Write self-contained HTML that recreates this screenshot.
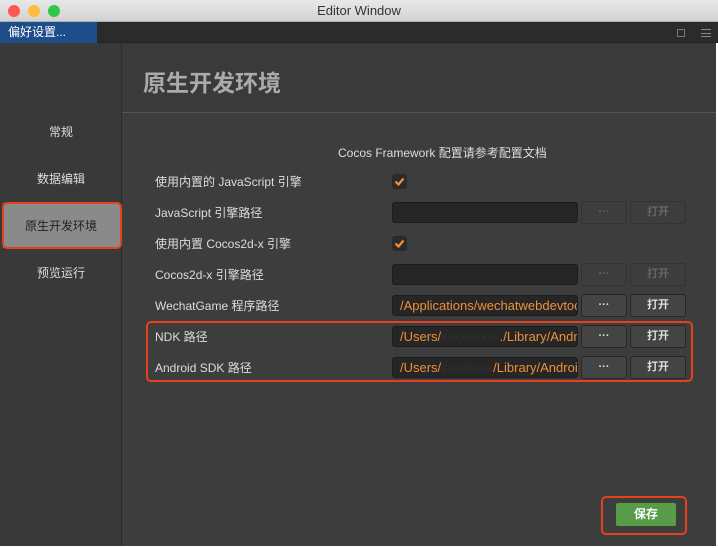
<!DOCTYPE html>
<html><head><meta charset="utf-8"><style>
*{margin:0;padding:0;box-sizing:border-box}
body{width:718px;height:548px;background:#fff;font-family:"Liberation Sans","Noto Sans CJK SC",sans-serif;position:relative;overflow:hidden;font-size:12px}
.abs{position:absolute}
#title{left:0;top:0;width:718px;height:22px;background:linear-gradient(#e8e8e8,#d2d2d2);border-bottom:1px solid #b0b0b0;text-align:center;line-height:22px;font-size:13px;color:#333}
.dot{top:5px;width:12px;height:12px;border-radius:50%}
#tabs{left:0;top:22px;width:718px;height:21px;background:#2b2b2b;border-bottom:1px solid #222}
#tab{left:0;top:22px;width:97px;height:21px;background:#1e4d8c;color:#fff;font-size:12px;line-height:21px;padding-left:8px}
#side{left:0;top:43px;width:122px;height:503px;background:#393939;border-right:1px solid #2c2c2c}
.si{left:0;width:122px;text-align:center;color:#ddd;font-size:12px}
#main{left:122px;top:43px;width:594px;height:503px;background:#3d3d3d}
#hdr{left:122px;top:43px;width:594px;height:70px;background:#3a3a3a;border-bottom:1px solid #555}
h1{position:absolute;left:143px;top:64px;font-size:23px;color:#aaa;font-weight:bold}
.lbl{left:155px;color:#ddd;font-size:12px}
.inp{left:392px;width:186px;height:21px;background:#262626;border:1px solid #1c1c1c;border-radius:3px;color:#f0903a;font-size:13px;line-height:19px;padding-left:7px;overflow:hidden;white-space:nowrap}
.b1,.b2{height:23px;border:1px solid #262626;border-radius:3px;background:#444;color:#ddd;text-align:center;line-height:21px;font-size:11px}
.b1{left:581px;width:46px;font-weight:bold}.b2{left:630px;width:56px;font-weight:bold}
.dis{background:#3d3d3d;color:#666;border-color:#333}
.cb{left:392px;width:15px;height:15px;background:#2a2a2a;border-radius:3px}
.red{border:2px solid #e8401c;border-radius:5px}
</style></head><body>
<div id="title" class="abs">Editor Window</div>
<div class="abs dot" style="left:8px;background:#fc5753"></div>
<div class="abs dot" style="left:28px;background:#fdbc40"></div>
<div class="abs dot" style="left:48px;background:#33c748"></div>
<div id="tabs" class="abs"></div>
<div id="tab" class="abs">偏好设置...</div>
<div class="abs" style="left:677px;top:29px;width:8px;height:8px;border:1px solid #777"></div>
<div class="abs" style="left:701px;top:29px;width:10px;height:8px;border-top:1px solid #888;border-bottom:1px solid #888"></div>
<div class="abs" style="left:701px;top:33px;width:10px;height:1px;background:#888"></div>
<div id="side" class="abs"></div>
<div class="abs si" style="top:123px">常规</div>
<div class="abs si" style="top:170px">数据编辑</div>
<div class="abs" style="left:3px;top:203px;width:117px;height:45px;background:#8a8a8a"></div>
<div class="abs red" style="left:2px;top:202px;width:120px;height:47px"></div>
<div class="abs si" style="top:217px;color:#222">原生开发环境</div>
<div class="abs si" style="top:264px">预览运行</div>
<div id="main" class="abs"></div>
<div id="hdr" class="abs"></div>
<h1>原生开发环境</h1>
<div class="abs" style="left:338px;top:144px;color:#ddd">Cocos Framework 配置请参考配置文档</div>

<div class="abs lbl" style="top:173px">使用内置的 JavaScript 引擎</div>
<div class="abs cb" style="top:174px"><svg width="15" height="15"><path d="M3.5 7.5L6.5 10.5L11.5 4.5" stroke="#f0903a" stroke-width="2.2" fill="none"/></svg></div>
<div class="abs lbl" style="top:204px">JavaScript 引擎路径</div>
<div class="abs inp" style="top:202px"></div><div class="abs b1 dis" style="top:201px">···</div><div class="abs b2 dis" style="top:201px">打开</div>
<div class="abs lbl" style="top:235px">使用内置 Cocos2d-x 引擎</div>
<div class="abs cb" style="top:236px"><svg width="15" height="15"><path d="M3.5 7.5L6.5 10.5L11.5 4.5" stroke="#f0903a" stroke-width="2.2" fill="none"/></svg></div>
<div class="abs lbl" style="top:266px">Cocos2d-x 引擎路径</div>
<div class="abs inp" style="top:264px"></div><div class="abs b1 dis" style="top:263px">···</div><div class="abs b2 dis" style="top:263px">打开</div>
<div class="abs lbl" style="top:297px">WechatGame 程序路径</div>
<div class="abs inp" style="top:295px">/Applications/wechatwebdevtools</div><div class="abs b1" style="top:294px">···</div><div class="abs b2" style="top:294px">打开</div>
<div class="abs lbl" style="top:328px">NDK 路径</div>
<div class="abs inp" style="top:326px">/Users/<span style="color:#2e2e2e">xxxxxxxxx</span>./Library/Android</div><div class="abs b1" style="top:325px">···</div><div class="abs b2" style="top:325px">打开</div>
<div class="abs lbl" style="top:359px">Android SDK 路径</div>
<div class="abs inp" style="top:357px">/Users/<span style="color:#2e2e2e">xxxxxxxx</span>/Library/Android</div><div class="abs b1" style="top:356px">···</div><div class="abs b2" style="top:356px">打开</div>
<div class="abs red" style="left:146px;top:321px;width:547px;height:61px"></div>

<div class="abs" style="left:615px;top:502px;width:62px;height:25px;background:#5a9b4a;border:1px solid #2e4a28;border-radius:3px;color:#fff;font-weight:bold;text-align:center;line-height:23px">保存</div>
<div class="abs red" style="left:601px;top:496px;width:86px;height:39px"></div>
</body></html>
